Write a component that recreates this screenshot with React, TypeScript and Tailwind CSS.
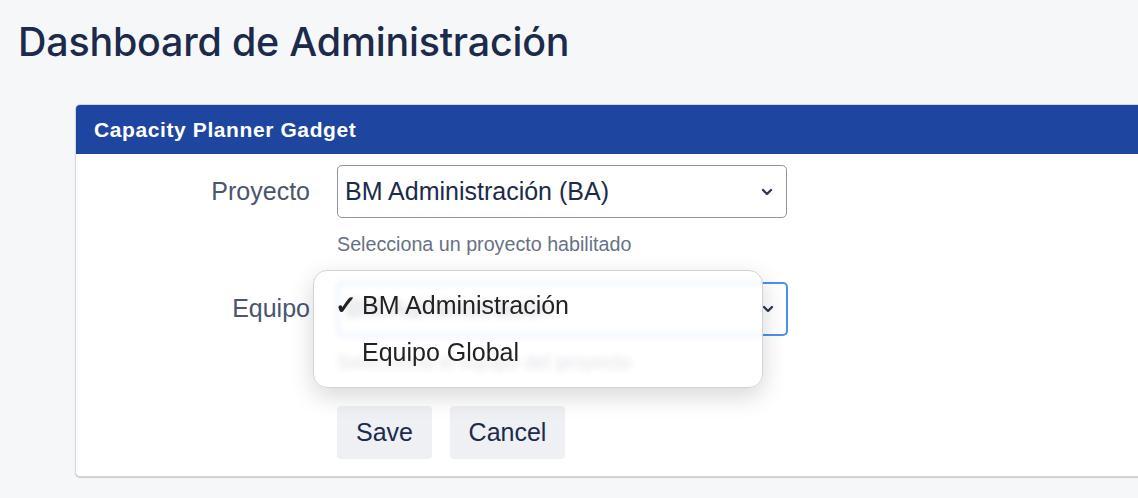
import React from "react";

function Chevron({ className = "" }: { className?: string }) {
  return (
    <svg width="14" height="14" viewBox="0 0 14 14" className={className}>
      <path d="M3 5 L7 9 L11 5" fill="none" stroke="#2d3b55" strokeWidth="2.4" strokeLinecap="round" strokeLinejoin="round" />
    </svg>
  );
}

export default function App() {
  return (
    <div className="min-h-[498px] w-[1138px] overflow-hidden bg-[#f6f7f9] font-['Liberation_Sans',Arial,sans-serif]">
      <h1 className="pl-[18px] pt-[17px] font-['Inter',sans-serif] text-[39.4px] font-medium leading-[50px] tracking-[-0.2px] text-[#1c2a4b]">
        Dashboard de Administración
      </h1>
      <div className="ml-[75px] mt-[37px] w-[1100px] rounded-[5px] border border-[#d3d6dc] bg-white shadow-[0_1px_1px_rgba(0,0,0,0.18)]">
        <div className="flex h-[49px] items-center rounded-t-[4px] bg-[#1e46a0] pl-[18px] text-[21px] font-bold tracking-[0.6px] text-white">
          Capacity Planner Gadget
        </div>
        <div className="relative pb-[17px] pt-[11px]">
          {/* Proyecto row */}
          <div className="flex items-start">
            <div className="flex h-[53px] w-[234px] items-center justify-end text-[25px] text-[#4a5570]">Proyecto</div>
            <div className="ml-[27px]">
              <div className="flex h-[53px] w-[450px] items-center justify-between rounded-[5px] border border-[#8b94a5] pl-[7px] pr-[12px] text-[25px] text-[#1c2a4b]">
                <span>BM Administración (BA)</span>
                <Chevron />
              </div>
              <div className="mt-[14px] text-[19.7px] leading-[24px] text-[#677186]">Selecciona un proyecto habilitado</div>
            </div>
          </div>
          {/* Equipo row */}
          <div className="mt-[26px] flex items-start">
            <div className="flex h-[54px] w-[234px] items-center justify-end text-[25px] text-[#4a5570]">Equipo</div>
            <div className="ml-[27px]">
              <div className="flex h-[54px] w-[451px] items-center justify-between rounded-[5px] border-2 border-[#4d8ef5] pl-[7px] pr-[11px] text-[25px] text-[#1c2a4b]">
                <span>BM Administración</span>
                <Chevron />
              </div>
              <div className="mt-[14px] text-[19.7px] leading-[24px] text-[#677186]">Selecciona el equipo del proyecto</div>
            </div>
          </div>
          {/* Buttons */}
          <div className="ml-[261px] mt-[32px] flex gap-[18px]">
            <button className="h-[53px] w-[95px] rounded-[4px] bg-[#eef0f3] text-[25px] text-[#1c2a4b]">Save</button>
            <button className="h-[53px] w-[115px] rounded-[4px] bg-[#eef0f3] text-[25px] text-[#1c2a4b]">Cancel</button>
          </div>

          {/* Native-like dropdown menu */}
          <div className="absolute left-[237px] top-[116px] w-[450px] rounded-[14px] border border-[#cfd2d8] bg-white/80 py-[11px] shadow-[0_8px_24px_rgba(0,0,0,0.16)] backdrop-blur-[3px]">
            <div className="flex h-[47px] items-center text-[25px] text-[#222]">
              <span className="w-[48px] pr-[5px] text-right text-[26px] font-bold">✓</span>
              <span>BM Administración</span>
            </div>
            <div className="flex h-[47px] items-center text-[25px] text-[#222]">
              <span className="w-[48px]"></span>
              <span>Equipo Global</span>
            </div>
          </div>
        </div>
      </div>
    </div>
  );
}
